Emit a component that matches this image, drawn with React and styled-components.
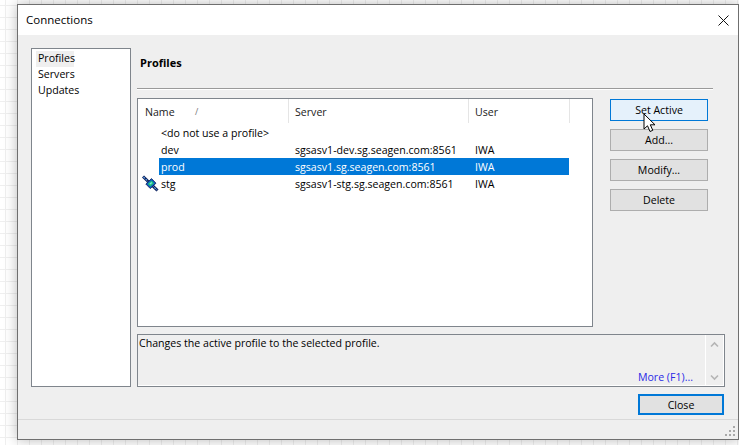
import React from "react";
import styled, { createGlobalStyle } from "styled-components";

const Global = createGlobalStyle`
  html, body { margin: 0; padding: 0; height: 100%; overflow: hidden; }
  body {
    width: 739px; height: 445px;
    background-color: #fff;
    background-image:
      linear-gradient(to right, #efefef 1px, transparent 1px),
      linear-gradient(to bottom, #efefef 1px, transparent 1px);
    background-size: 12px 12px;
    background-position: 5px 5px;
    font-family: "Open Sans", "Noto Sans", sans-serif;
    font-size: 10.6px;
    color: #000;
  }
`;

const Page = styled.div`
  padding: 4px 0 0 17px;
`;

const Window = styled.div`
  position: relative;
  box-sizing: border-box;
  width: 722px;
  height: 436px;
  border: 1px solid #6f6f6f;
  background: #efefef;
  box-shadow: 0 0 12px rgba(0, 0, 0, 0.28);
  display: flex;
  flex-direction: column;
`;

const TitleBar = styled.div`
  box-sizing: border-box;
  height: 30px;
  background: #fff;
  display: flex;
  align-items: center;
  justify-content: space-between;
  padding: 0 9px 0 8px;
  font-size: 11.5px;
  line-height: 28px;
  flex: none;
`;

const CloseX = styled.svg`
  width: 11px;
  height: 11px;
  display: block;
`;

const Body = styled.div`
  display: flex;
  gap: 6px;
  padding: 13px 13px 0 13px;
  flex: none;
`;

const Sidebar = styled.ul`
  box-sizing: border-box;
  width: 100px;
  height: 339px;
  margin: 0;
  padding: 2px 0 0 4px;
  list-style: none;
  background: #fff;
  border: 1px solid #7f858c;
`;

const SideItem = styled.li`
  box-sizing: border-box;
  height: 16px;
  line-height: 14px;
  width: ${(p) => (p.$active ? "38px" : "auto")};
  padding-left: 2px;
  background: ${(p) => (p.$active ? "#efefef" : "transparent")};
`;

const Main = styled.div`
  width: 588px;
  display: flex;
  flex-direction: column;
`;

const Heading = styled.div`
  height: 40px;
  box-sizing: border-box;
  padding: 7px 0 0 3px;
  font-weight: 700;
  line-height: 16px;
  font-size: 11px;
`;

const Rule = styled.div`
  width: 576px;
  height: 2px;
  background: linear-gradient(to bottom, #9a9a9a 1px, #fff 1px);
  flex: none;
`;

const ContentRow = styled.div`
  display: flex;
  margin-top: 8px;
  height: 229px;
`;

const ListBox = styled.div`
  box-sizing: border-box;
  width: 456px;
  height: 229px;
  background: #fff;
  border: 1px solid #7f858c;
`;

const HeaderRow = styled.div`
  display: grid;
  grid-template-columns: 151px 180px 101px;
  height: 25px;
  align-items: stretch;
  line-height: 26px;
`;

const HeadCell = styled.div`
  position: relative;
  padding-left: ${(p) => p.$pad}px;
  height: 24px;
  border-right: 1px solid #e5e5e5;
  color: #1a1a1a;
`;

const SortMark = styled.span`
  position: absolute;
  left: 57px;
  top: 0;
  font-size: 9px;
  color: #777;
`;

const Rows = styled.div`
  padding-left: 21px;
`;

const Row = styled.div`
  position: relative;
  display: grid;
  grid-template-columns: 129px 180px 101px;
  height: 17px;
  width: 410px;
  line-height: 19px;
  background: ${(p) => (p.$selected ? "#0078d7" : "transparent")};
  color: ${(p) => (p.$selected ? "#fff" : "#000")};
`;

const Cell = styled.div`
  padding-left: ${(p) => p.$pad}px;
  white-space: nowrap;
`;

const Satellite = styled.svg`
  position: absolute;
  left: -17px;
  top: 0;
  width: 17px;
  height: 17px;
`;

const ButtonColumn = styled.div`
  margin-left: 17px;
  padding-top: 1px;
  display: flex;
  flex-direction: column;
  gap: 8px;
`;

const Button = styled.div`
  box-sizing: border-box;
  width: ${(p) => (p.$wide ? "86px" : "98px")};
  height: ${(p) => (p.$wide ? "21px" : "22px")};
  padding-bottom: ${(p) => (p.$wide ? "0" : "1px")};
  display: flex;
  align-items: center;
  justify-content: center;
  background: ${(p) => (p.$hover ? "#e5f1fb" : "#e1e1e1")};
  border: ${(p) => (p.$wide ? "2px solid #0078d7" : p.$hover ? "1px solid #0078d7" : "1px solid #adadad")};
`;

const DescBox = styled.div`
  box-sizing: border-box;
  position: relative;
  margin-top: 7px;
  height: 53px;
  border: 1px solid #7f858c;
  display: flex;
  box-shadow: inset 0 -1px 0 #fff, inset -1px 0 0 #fff;
`;

const DescText = styled.div`
  flex: 1;
  padding: 0 0 0 1px;
  line-height: 16px;
  position: relative;
`;

const MoreLink = styled.span`
  position: absolute;
  right: 12px;
  bottom: 1px;
  color: #2a2ae6;
  line-height: 16px;
`;

const ScrollBar = styled.div`
  width: 17px;
  border-left: 1px solid #fff;
  margin-right: 1px;
  display: flex;
  flex-direction: column;
  justify-content: space-between;
  align-items: center;
  padding: 6px 0 5px;
`;

const Chevron = styled.svg`
  width: 9px;
  height: 7px;
  display: block;
`;

const Footer = styled.div`
  display: flex;
  justify-content: flex-end;
  padding: 7px 14px 0 0;
  height: 28px;
  box-sizing: border-box;
  flex: none;
`;

const StatusBar = styled.div`
  flex: 1;
  margin-top: 4px;
  border-top: 1px solid #d9d9d9;
`;

const Grip = styled.svg`
  position: absolute;
  right: 2px;
  bottom: 2px;
  width: 11px;
  height: 11px;
`;

const Pointer = styled.svg`
  position: absolute;
  left: 625px;
  top: 108px;
  width: 14px;
  height: 21px;
`;

function SatelliteIcon() {
  return (
    <Satellite viewBox="0 0 17 17">
      <path d="M1 1.5 L15.5 15.5" stroke="#0d1c56" strokeWidth="3" />
      <path d="M1.5 2 L15 15" stroke="#63b0f5" strokeWidth="1.1" strokeDasharray="2 1" />
      <path d="M3.8 9 L9.5 3.6 L14 8.2 L8.3 13.6 Z" fill="#0a5cc4" stroke="#0d1c56" strokeWidth="0.8" />
      <path d="M5.8 9 L9.5 5.6 L12 8.2 L8.4 11.4 Z" fill="#1fc27a" />
      <path d="M7.6 8.6 L9.4 7 L10.2 8 L8.5 9.6 Z" fill="#7de8e0" />
    </Satellite>
  );
}

export default function App() {
  return (
    <>
      <Global />
      <Page>
        <Window>
          <TitleBar>
            <span>Connections</span>
            <CloseX viewBox="0 0 11 11">
              <path d="M0.5 0.5 L10.5 10.5 M10.5 0.5 L0.5 10.5" stroke="#111" strokeWidth="1" fill="none" />
            </CloseX>
          </TitleBar>
          <Body>
            <Sidebar>
              <SideItem $active>Profiles</SideItem>
              <SideItem>Servers</SideItem>
              <SideItem>Updates</SideItem>
            </Sidebar>
            <Main>
              <Heading>Profiles</Heading>
              <Rule />
              <ContentRow>
                <ListBox>
                  <HeaderRow>
                    <HeadCell $pad={7}>
                      Name<SortMark>/</SortMark>
                    </HeadCell>
                    <HeadCell $pad={6}>Server</HeadCell>
                    <HeadCell $pad={6}>User</HeadCell>
                  </HeaderRow>
                  <Rows>
                    <Row>
                      <Cell $pad={2}>&lt;do not use a profile&gt;</Cell>
                      <Cell />
                      <Cell />
                    </Row>
                    <Row>
                      <Cell $pad={2}>dev</Cell>
                      <Cell $pad={7}>sgsasv1-dev.sg.seagen.com:8561</Cell>
                      <Cell $pad={7}>IWA</Cell>
                    </Row>
                    <Row $selected>
                      <Cell $pad={2}>prod</Cell>
                      <Cell $pad={7}>sgsasv1.sg.seagen.com:8561</Cell>
                      <Cell $pad={7}>IWA</Cell>
                    </Row>
                    <Row>
                      <SatelliteIcon />
                      <Cell $pad={2}>stg</Cell>
                      <Cell $pad={7}>sgsasv1-stg.sg.seagen.com:8561</Cell>
                      <Cell $pad={7}>IWA</Cell>
                    </Row>
                  </Rows>
                </ListBox>
                <ButtonColumn>
                  <Button $hover>Set Active</Button>
                  <Button>Add...</Button>
                  <Button>Modify...</Button>
                  <Button>Delete</Button>
                </ButtonColumn>
              </ContentRow>
              <DescBox>
                <DescText>
                  Changes the active profile to the selected profile.
                  <MoreLink>More (F1)...</MoreLink>
                </DescText>
                <ScrollBar>
                  <Chevron viewBox="0 0 9 7">
                    <path d="M1 5.5 L4.5 2 L8 5.5" stroke="#b5b5b5" strokeWidth="1.6" fill="none" />
                  </Chevron>
                  <Chevron viewBox="0 0 9 7">
                    <path d="M1 1.5 L4.5 5 L8 1.5" stroke="#b5b5b5" strokeWidth="1.6" fill="none" />
                  </Chevron>
                </ScrollBar>
              </DescBox>
            </Main>
          </Body>
          <Footer>
            <Button $wide>Close</Button>
          </Footer>
          <StatusBar />
          <Grip viewBox="0 0 11 11">
            <path d="M8 0h2v2H8z M4 4h2v2H4z M8 4h2v2H8z M0 8h2v2H0z M4 8h2v2H4z M8 8h2v2H8z" fill="#a8a8a8" />
          </Grip>
          <Pointer viewBox="0 0 14 21">
            <path d="M1 1 L1 16 L4.5 12.8 L7 18.5 L9.8 17.3 L7.3 11.8 L12 11.8 Z" fill="#fff" stroke="#000" strokeWidth="1" />
          </Pointer>
        </Window>
      </Page>
    </>
  );
}
